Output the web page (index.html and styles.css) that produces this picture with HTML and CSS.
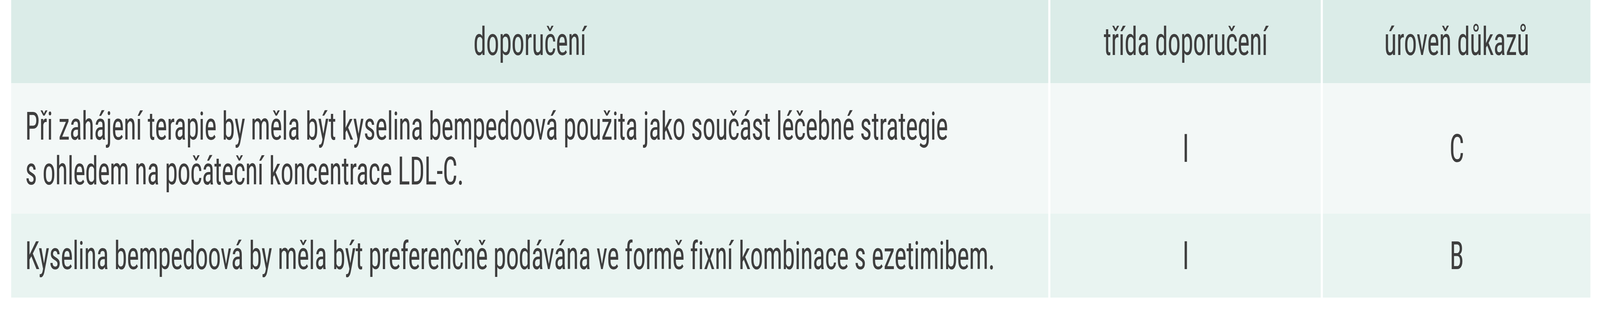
FILE: index.html
```html
<!DOCTYPE html>
<html lang="cs">
<head>
<meta charset="utf-8">
<link rel="stylesheet" href="styles.css">
</head>
<body>
<div class="frame">
  <div class="page">
    <table class="rec">
      <thead>
        <tr class="head">
          <th class="c1">doporučení</th>
          <th class="c2">třída doporučení</th>
          <th class="c3">úroveň důkazů</th>
        </tr>
      </thead>
      <tbody>
        <tr class="r1">
          <td class="c1 txt">Při zahájení terapie by měla být kyselina bempedoová použita jako součást léčebné strategie<br>s ohledem na počáteční koncentrace LDL-C.</td>
          <td class="c2">I</td>
          <td class="c3">C</td>
        </tr>
        <tr class="r2">
          <td class="c1 txt">Kyselina bempedoová by měla být preferenčně podávána ve formě fixní kombinace s ezetimibem.</td>
          <td class="c2">I</td>
          <td class="c3">B</td>
        </tr>
      </tbody>
    </table>
  </div>
</div>
</body>
</html>
```
FILE: styles.css
```css
html, body {
  margin: 0;
  padding: 0;
  background: #ffffff;
}
.frame {
  width: 100%;
  height: 800px;
  overflow: hidden;
}
.page {
  width: 6160px;
  padding-left: 43px;
  box-sizing: border-box;
  transform-origin: 0 0;
}
@media (max-width: 6000px) {
  .page { transform: scaleX(0.66494); }
}
.rec {
  width: 6080px;
  border-collapse: separate;
  border-spacing: 0;
  table-layout: fixed;
  font-family: "Roboto", "Liberation Sans", sans-serif;
  font-stretch: condensed;
  font-size: 100px;
  line-height: 115px;
  letter-spacing: -1px;
  color: #3e3e3e;
}
.rec th, .rec td {
  font-weight: normal;
  text-align: center;
  vertical-align: middle;
  padding: 0;
  white-space: nowrap;
}
.c1 { width: 3993px; }
.c2 { width: 1041px; border-left: 8px solid #ffffff; }
.c3 { width: 1030px; border-left: 8px solid #ffffff; }
.head th {
  height: 213px;
  background: #dbece8;
}
.r1 td {
  height: 335px;
  background: #f3f8f7;
}
.r2 td {
  height: 215px;
  background: #e9f4f1;
}
.rec td.txt {
  text-align: left;
  padding-left: 54px;
}
```
